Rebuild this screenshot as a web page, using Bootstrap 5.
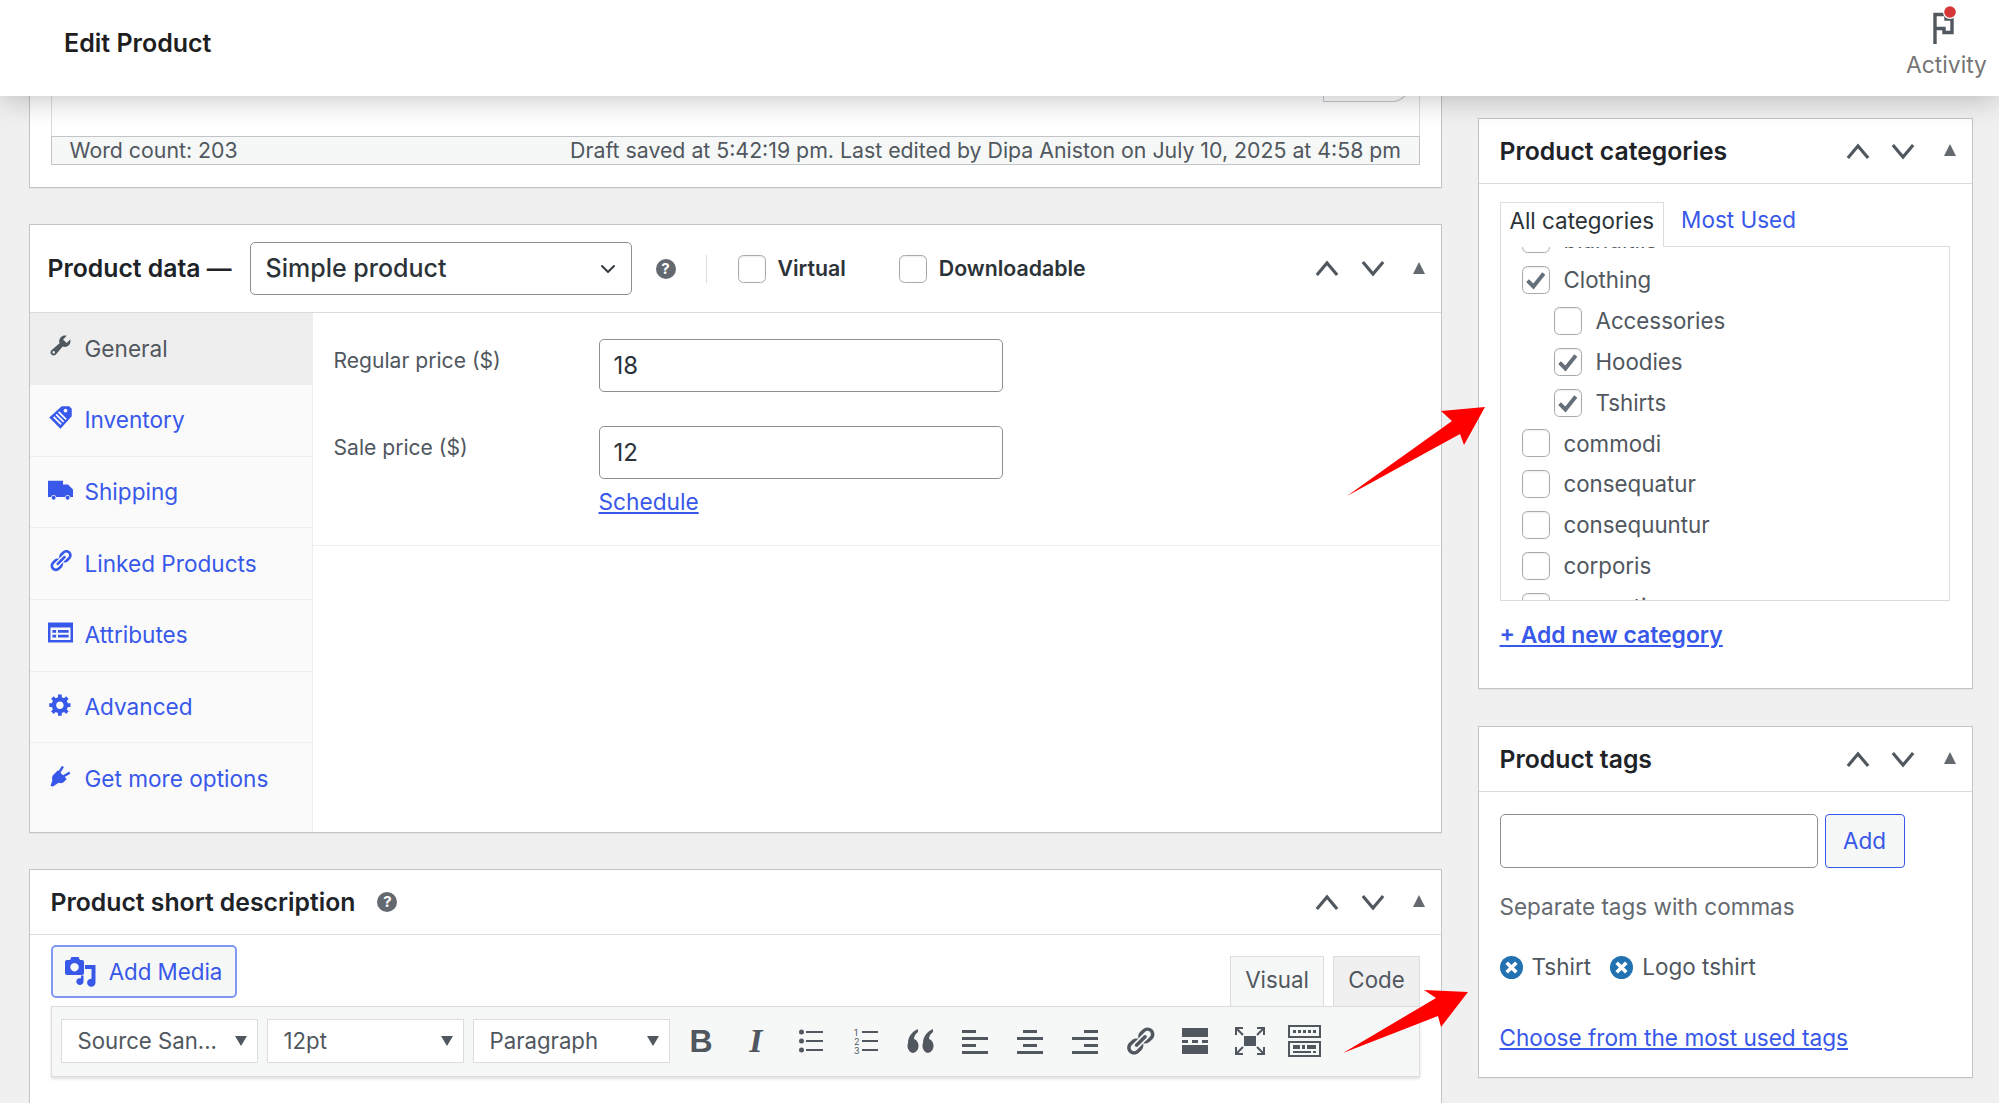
<!DOCTYPE html>
<html lang="en">
<head>
<meta charset="utf-8">
<title>Edit Product</title>
<link href="https://cdn.jsdelivr.net/npm/bootstrap@5.3.0/dist/css/bootstrap.min.css" rel="stylesheet">
<style>
body{font-family:Inter,"Liberation Sans",sans-serif;background:#f0f0f1;color:#50575e;font-size:22px;height:1103px;overflow:hidden}
a{color:#3858e9}
.wp-top{height:96px;background:#fff;box-shadow:0 0 32px rgba(0,0,0,.28);z-index:5;padding-left:64px;flex:none}
.wp-title{font-size:25px;font-weight:600;color:#1e1e1e;padding-bottom:9px}
.wp-activity{width:105px;padding-top:4px;height:96px;color:#757575;font-size:22.8px;line-height:26px}
.wp-activity svg{display:block;margin:0 auto 6px;width:34px;height:42px}
.wp-main{padding-left:28.5px;gap:35.5px;flex:1;min-height:0;overflow:hidden}
.wp-left{width:1413.5px;flex:none}
.wp-right{width:495px;flex:none;padding-top:22px}
.wp-box{background:#fff;border:1px solid #c3c4c7;border-radius:0;box-shadow:0 1px 1px rgba(0,0,0,.04)}
.wp-first{height:92px;border-top:0;margin-bottom:36px;padding:0 21px}
.wp-editor{height:69px;border:1px solid #dcdcde;border-top:0;border-bottom:0;position:relative}
.wp-ghostbtn{width:87px;height:20px;margin:-14px 0 0 1271px;border:1.5px solid #c6c7d2;border-top:0;border-radius:0 0 18px 0}
.wp-status{height:29px;border:1px solid #c3c4c7;background:#f6f7f7;margin-top:-29px;padding:0 18px;font-size:21.3px;line-height:27px;color:#50575e;position:relative}
.wp-hd{border-bottom:1px solid #dcdcde;background:#fff;padding:0;border-radius:0!important}
.wp-h88{height:88px;padding-left:18px}
.wp-h65{height:65px;padding-left:21px}
.wp-ttl{font-size:24.75px;font-weight:600;color:#1d2327;line-height:1}
.wp-pselect{width:382px;height:53px;margin-left:18px;font-size:25px;font-weight:500;color:#2c3338;border:1px solid #8c8f94;border-radius:5px;padding:0 15px;box-shadow:none;background-size:22px 16px;background-position:right 12px center}
.wp-q{width:20px;height:20px;border-radius:50%;background:#646970;color:#fff;font-size:15px;font-weight:700;line-height:20px;text-align:center;flex:none;display:inline-block}
.wp-sep{width:1px;height:28px;background:#dcdcde;margin:0 31px 0 30px}
.wp-chk{width:28px;height:28px;margin:0;border:1.5px solid #a7aaad;border-radius:6px;flex:none;float:none;box-shadow:inset 0 1px 2px rgba(0,0,0,.08)}
.form-check-input.wp-chk:checked{background-color:#fff;border-color:#a7aaad;background-size:100% 100%;background-image:url("data:image/svg+xml,%3Csvg xmlns='http://www.w3.org/2000/svg' viewBox='0 0 20 20'%3E%3Cpath fill='none' stroke='%23646f7a' stroke-width='3' d='M3.500 10.500L8 15l8-10'/%3E%3C/svg%3E")}
.wp-lbl{font-size:21.3px;font-weight:600;color:#2c3338;margin:0 0 0 12px}
.wp-mr54{margin-right:53px}
.wp-ctl{margin-left:auto;gap:0;padding-right:15px}
.wp-ctl svg{display:block}
.wp-ctl span+span{margin-left:21.5px}
.wp-ctl span:last-child{margin-left:27.5px;position:relative;top:-1px}
.wp-side{width:283px;flex:none;background:#fafafa;border-right:1px solid #eee}
.wp-side .list-group-item{height:71.7px;padding:0 0 0 18px;background:#fafafa;border:0;border-bottom:1px solid #eee;border-radius:0;color:#3858e9;font-size:22.6px;display:flex;align-items:center}
.wp-side .list-group-item svg{width:25px;height:25px;fill:currentColor;margin-right:12px;flex:none;position:relative;top:-3px}
.wp-side .wp-active{background:#eee!important;color:#50575e!important;height:72px!important}
.wp-panel{height:233px;border-bottom:1px solid #eee;padding:26px 0 0 21px}
.wp-flabel{width:265px;flex:none;font-size:21.1px;color:#50575e;padding-top:6px;margin:0}
.wp-inp{width:404px;height:53px;border:1px solid #8c8f94;border-radius:5px;font-size:24px;color:#2c3338;padding:0 14px;box-shadow:none}
.wp-mr{margin-top:34px}
.wp-sched{margin:8px 0 0 265px;display:block;font-size:22.7px;line-height:30px}
.wp-addmedia{height:53px;width:186px;font-size:22.3px;color:#3858e9;border:2px solid #8198f0;border-radius:5px;background:#f6f7f7;padding:0;display:flex;align-items:center;justify-content:center;gap:13px;margin:10px 0 8px}
.wp-addmedia:hover{color:#3858e9;background:#f6f7f7;border-color:#8198f0}
.wp-tb{padding:0 21px}
.wp-tab{height:50px;border:1px solid #dcdcde;border-bottom:0;background:#f6f7f7;font-size:22.3px;color:#50575e;display:flex;align-items:center;justify-content:center;border-radius:0;padding-bottom:3px}
.wp-tab1{width:94px;margin-right:9px}
.wp-tab2{width:87px;background:#f0f0f1}
.wp-tools{height:71px;background:#f6f7f7;border:1px solid #dcdcde;box-shadow:0 2px 3px rgba(0,0,0,.12);padding:0 0 1px 9px;align-items:center}
.wp-ts{width:197px;height:44px;margin-right:9px;background:#fff;border:1px solid #dcdcde;padding:0 0 0 16px;font-size:22.2px;color:#50575e;display:flex;align-items:center;position:relative;flex:none}
.wp-ts i{position:absolute;right:10px;top:16px;border:6.5px solid transparent;border-top:10px solid #50575e;border-bottom:0}
.wp-tbi{width:54.9px;flex:none;text-align:center;height:44px;display:flex;align-items:center;justify-content:center;color:#50575e}
.wp-tbi svg{fill:#50575e}
.wp-tbb{font:700 32px "Liberation Sans",sans-serif}
.wp-tbl{font:italic 700 34px "Liberation Serif",serif}
.wp-catbody{padding:17px 21px 0}
.wp-cattabs{height:45px;align-items:flex-end}
.wp-cattab{height:45px;display:flex;align-items:center;padding:0 9px 8px;font-size:22.4px;color:#2c3338;background:#fff;border:1px solid #dcdcde;border-bottom:0;position:relative;top:1px;z-index:1}
.wp-cattabs a{font-size:22.5px;text-decoration:none;margin:0 0 9px 17px}
.wp-catlist{height:355px;border:1px solid #dcdcde;overflow:hidden;width:450px}
.wp-catin{margin-top:-28px}
.wp-catrow{height:40.8px;display:flex;align-items:center;padding-left:21px;font-size:22.3px;color:#50575e;margin:0}
.wp-catrow .wp-chk{margin-right:14px}
.wp-ind{padding-left:53px}
.wp-addcat{display:block;margin-top:19px;font-size:22.9px;font-weight:600;line-height:30px}
.wp-catbox{height:571px;margin-bottom:37px}
.wp-tagbox{height:352px}
.wp-tagbody{padding:22px 21px 0}
.wp-taginp{width:318px;height:54px;border:1px solid #8c8f94;border-radius:5px;box-shadow:none}
.wp-addbtn{width:80px;height:54px;margin-left:7px;border:1.5px solid #3858e9;border-radius:4px;background:#f6f7f7;color:#3858e9;font-size:22.5px;padding:0}
.wp-addbtn:hover{color:#3858e9;background:#f6f7f7;border-color:#3858e9}
.wp-help{margin:24px 0 0;line-height:30px;font-size:22.5px;color:#646970}
.wp-tagrow{margin-top:30px;height:30px;font-size:22.5px;color:#50575e}
.wp-tagrow svg{margin-right:9px;flex:none}
.wp-tagrow span{margin-right:19px}
.wp-choose{display:block;margin-top:41px;font-size:22.6px;line-height:30px}
.wp-arrow{position:absolute;left:0;top:0;z-index:6;pointer-events:none}
</style>
</head>
<body class="d-flex flex-column position-relative">
<svg width="0" height="0" class="position-absolute">
  <defs>
    <symbol id="up" viewBox="0 0 26 18"><path d="M2 16L13 3l11 13" fill="none" stroke="#50575e" stroke-width="3.4"/></symbol>
    <symbol id="down" viewBox="0 0 26 18"><path d="M2 2l11 13L24 2" fill="none" stroke="#50575e" stroke-width="3.4"/></symbol>
    <symbol id="tri" viewBox="0 0 14 14"><path d="M7 1l6 12H1z" fill="#646970"/></symbol>
    <symbol id="xc" viewBox="0 0 24 24"><circle cx="12" cy="12" r="12" fill="#2271b1"/><path d="M7 7l10 10m0-10L7 17" stroke="#fff" stroke-width="3.8" fill="none"/></symbol>
    <symbol id="alignl" viewBox="0 0 26 26"><path d="M0 2h14v3H0zM0 9h26v3H0zM0 16h14v3H0zM0 23h26v3H0z"/></symbol>
    <symbol id="alignc" viewBox="0 0 26 26"><path d="M6 2h14v3H6zM0 9h26v3H0zM6 16h14v3H6zM0 23h26v3H0z"/></symbol>
    <symbol id="alignr" viewBox="0 0 26 26"><path d="M12 2h14v3H12zM0 9h26v3H0zM12 16h14v3H12zM0 23h26v3H0z"/></symbol>
  </defs>
</svg>

<header class="wp-top d-flex align-items-center justify-content-between position-relative">
  <div class="wp-title">Edit Product</div>
  <div class="wp-activity text-center">
    <svg viewBox="0 0 34 42"><path d="M5 40V10.500H16V15H22V28.500H14V24.500H5" fill="none" stroke="#50575e" stroke-width="3.4"/><circle cx="20" cy="8" r="7" fill="#fff"/><circle cx="20" cy="8" r="5.800" fill="#d63638"/></svg>
    Activity
  </div>
</header>

<div class="wp-main d-flex align-items-start">
  <div class="wp-left">
    <div class="card wp-box wp-first">
      <div class="wp-editor"><div class="wp-ghostbtn"></div></div>
      <div class="wp-status d-flex justify-content-between"><span>Word count: 203</span><span>Draft saved at 5:42:19 pm. Last edited by Dipa Aniston on July 10, 2025 at 4:58 pm</span></div>
    </div>

    <div class="card wp-box mb-0" style="margin-bottom:36px!important">
      <div class="card-header wp-hd wp-h88 d-flex align-items-center">
        <span class="wp-ttl">Product data —</span>
        <select class="form-select wp-pselect"><option>Simple product</option></select>
        <span class="wp-q ms-4">?</span>
        <span class="wp-sep"></span>
        <input class="form-check-input wp-chk" type="checkbox" id="v1"><label class="wp-lbl wp-mr54" for="v1">Virtual</label>
        <input class="form-check-input wp-chk" type="checkbox" id="v2"><label class="wp-lbl" for="v2">Downloadable</label>
        <div class="wp-ctl d-flex align-items-center">
          <span><svg width="24" height="17"><use href="#up"/></svg></span><span><svg width="24" height="17"><use href="#down"/></svg></span><span><svg width="14" height="14"><use href="#tri"/></svg></span>
        </div>
      </div>
      <div class="d-flex" style="height:519px">
        <div class="wp-side">
          <div class="list-group list-group-flush">
            <a class="list-group-item wp-active" href="#"><svg viewBox="0 0 20 20"><path d="M16.68 9.77c-1.34 1.34-3.3 1.67-4.95.99l-5.41 6.52c-.99.99-2.59.99-3.58 0s-.99-2.59 0-3.57l6.52-5.42c-.68-1.65-.35-3.61.99-4.95 1.28-1.28 3.12-1.62 4.72-1.06l-2.89 2.89 2.82 2.82 2.86-2.87c.53 1.58.18 3.39-1.08 4.65zM3.81 16.21c.4.39 1.04.39 1.43 0 .4-.4.4-1.04 0-1.43-.39-.4-1.03-.4-1.43 0-.39.39-.39 1.03 0 1.43z"/></svg>General</a>
            <a class="list-group-item" href="#"><svg viewBox="0 0 20 20"><path fill-rule="evenodd" d="M1 10l10-9h6l2 2v6l-9 10zM14 3a1.5 1.5 0 1 0 .01 0zM4 10l6 6 1-1-6-6zm2-2l6 6 1-1-6-6zm2-2l6 6 1-1-6-6z"/></svg>Inventory</a>
            <a class="list-group-item" href="#"><svg viewBox="0 0 20 20"><path d="M0 3h12v3h4l4 4v6h-2.2a2.2 2.2 0 0 0-4.2 0H6.6a2.2 2.2 0 0 0-4.2 0H0z"/><circle cx="4.5" cy="16.5" r="1.6"/><circle cx="15.7" cy="16.5" r="1.6"/></svg>Shipping</a>
            <a class="list-group-item" href="#"><svg viewBox="0 0 20 20"><path d="M17.74 2.76c1.68 1.69 1.68 4.41 0 6.1l-1.53 1.52c-1.12 1.12-2.7 1.47-4.14 1.09l2.62-2.61.76-.77.76-.76c.84-.84.84-2.2 0-3.04-.84-.85-2.2-.85-3.04 0l-.77.76-3.38 3.38c-.37-1.44-.02-3.02 1.1-4.14l1.52-1.53c1.69-1.68 4.42-1.68 6.1 0zM8.59 13.43l5.34-5.34c.42-.42.42-1.1 0-1.52-.44-.43-1.13-.39-1.53 0l-5.33 5.34c-.42.42-.42 1.1 0 1.52.44.43 1.13.39 1.52 0zm-.76 2.29l4.14-4.15c.38 1.44.03 3.02-1.09 4.14l-1.52 1.53c-1.69 1.68-4.41 1.68-6.1 0-1.68-1.68-1.68-4.42 0-6.1l1.53-1.52c1.12-1.12 2.7-1.47 4.14-1.1l-4.14 4.15c-.85.84-.85 2.2 0 3.05.84.84 2.2.84 3.04 0z"/></svg>Linked Products</a>
            <a class="list-group-item" href="#"><svg viewBox="0 0 20 20"><path fill-rule="evenodd" d="M0 2h20v16H0zM2 6v10h16V6zM3.5 8h3v2.2h-3zM3.5 11.8h3V14h-3zM8 8h8.5v2.2H8zM8 11.8h8.5V14H8z"/></svg>Attributes</a>
            <a class="list-group-item" href="#"><svg viewBox="0 0 20 20"><path d="M18 12h-2.18c-.17.7-.44 1.35-.81 1.93l1.54 1.54-2.1 2.1-1.54-1.54c-.58.36-1.23.63-1.91.79V19H8v-2.18c-.68-.16-1.33-.43-1.91-.79l-1.54 1.54-2.12-2.12 1.54-1.54c-.36-.58-.63-1.23-.79-1.91H1V9.03h2.17c.16-.7.44-1.35.8-1.94L2.43 5.55l2.1-2.1 1.54 1.54c.58-.37 1.24-.64 1.93-.81V2h3v2.18c.68.16 1.33.43 1.91.79l1.54-1.54 2.12 2.12-1.54 1.54c.36.59.64 1.24.8 1.94H18V12zm-8.5 1.5c1.66 0 3-1.34 3-3s-1.34-3-3-3-3 1.34-3 3 1.34 3 3 3z"/></svg>Advanced</a>
            <a class="list-group-item" href="#"><svg viewBox="0 0 20 20"><path d="M8 5l7 7-2.5 2.5c-1.5 1-3 1-4 .5L4 18l-2-.5 1.500-4.500c-.5-1.500-.3-3 .5-4zM11 1.500l1.800.8L10 7 8.400 6zM17 6l.8 1.800L13 10.500 12 9z"/></svg>Get more options</a>
          </div>
        </div>
        <div class="flex-grow-1">
          <div class="wp-panel">
            <div class="d-flex"><label class="wp-flabel">Regular price ($)</label><input class="form-control wp-inp" value="18"></div>
            <div class="d-flex wp-mr"><label class="wp-flabel">Sale price ($)</label><input class="form-control wp-inp" value="12"></div>
            <a class="wp-sched" href="#">Schedule</a>
          </div>
        </div>
      </div>
    </div>

    <div class="card wp-box" style="height:400px">
      <div class="card-header wp-hd wp-h65 d-flex align-items-center">
        <span class="wp-ttl">Product short description</span>
        <span class="wp-q" style="margin-left:22px">?</span>
        <div class="wp-ctl d-flex align-items-center">
          <span><svg width="24" height="17"><use href="#up"/></svg></span><span><svg width="24" height="17"><use href="#down"/></svg></span><span><svg width="14" height="14"><use href="#tri"/></svg></span>
        </div>
      </div>
      <div class="wp-tb">
        <div class="d-flex justify-content-between align-items-end">
          <button class="btn wp-addmedia" type="button">
            <svg width="31" height="30" viewBox="0 0 31 30" fill="#3858e9"><path fill-rule="evenodd" d="M2 3h3l1.500-3h7L15 3h2a2 2 0 0 1 2 2v11a2 2 0 0 1-2 2H2a2 2 0 0 1-2-2V5a2 2 0 0 1 2-2zM9.500 6a4.200 4.200 0 1 0 .01 0z"/><path d="M20 8h10.500v17.500a4.200 4 0 1 1-4-3.800V12H20z"/><path d="M16 18.500h2.500v6a3.600 3.400 0 1 1-2.500-3.200z"/></svg>
            Add Media
          </button>
          <div class="d-flex"><div class="wp-tab wp-tab1">Visual</div><div class="wp-tab wp-tab2">Code</div></div>
        </div>
        <div class="wp-tools d-flex">
          <div class="wp-ts">Source San...<i></i></div>
          <div class="wp-ts">12pt<i></i></div>
          <div class="wp-ts me-1">Paragraph<i></i></div>
          <div class="wp-tbi wp-tbb">B</div>
          <div class="wp-tbi wp-tbl">I</div>
          <div class="wp-tbi"><svg width="24" height="24" viewBox="0 0 24 24"><circle cx="2.500" cy="3" r="2.500"/><circle cx="2.500" cy="12" r="2.500"/><circle cx="2.500" cy="21" r="2.500"/><path d="M7 2h17v2H7zM7 11h17v2H7zM7 20h17v2H7z"/></svg></div>
          <div class="wp-tbi"><svg width="24" height="26" viewBox="0 0 24 26"><text x="0" y="8" font-size="9" font-family="Inter">1</text><text x="0" y="17" font-size="9" font-family="Inter">2</text><text x="0" y="26" font-size="9" font-family="Inter">3</text><path d="M8 3h16v2H8zM8 12h16v2H8zM8 21h16v2H8z"/></svg></div>
          <div class="wp-tbi"><svg width="27" height="24" viewBox="0 0 27 24"><path d="M11 0v3C8 5 7 8 7 10a5.500 7 0 1 1-6 4C1 7 6 2 11 0zM26 0v3c-3 2-4 5-4 7a5.500 7 0 1 1-6 4c0-7 5-12 10-14z"/></svg></div>
          <div class="wp-tbi"><svg width="26" height="26"><use href="#alignl"/></svg></div>
          <div class="wp-tbi"><svg width="26" height="26"><use href="#alignc"/></svg></div>
          <div class="wp-tbi"><svg width="26" height="26"><use href="#alignr"/></svg></div>
          <div class="wp-tbi"><svg width="32" height="32" viewBox="0 0 20 20" fill="#50575e"><path d="M17.74 2.76c1.68 1.69 1.68 4.41 0 6.1l-1.53 1.52c-1.12 1.12-2.7 1.47-4.14 1.09l2.62-2.61.76-.77.76-.76c.84-.84.84-2.2 0-3.04-.84-.85-2.2-.85-3.04 0l-.77.76-3.38 3.38c-.37-1.44-.02-3.02 1.1-4.14l1.52-1.53c1.69-1.68 4.42-1.68 6.1 0zM8.59 13.43l5.34-5.34c.42-.42.42-1.1 0-1.52-.44-.43-1.13-.39-1.53 0l-5.33 5.34c-.42.42-.42 1.1 0 1.52.44.43 1.13.39 1.52 0zm-.76 2.29l4.14-4.15c.38 1.44.03 3.02-1.09 4.14l-1.52 1.53c-1.69 1.68-4.41 1.68-6.1 0-1.68-1.68-1.68-4.42 0-6.1l1.53-1.52c1.12-1.12 2.7-1.47 4.14-1.1l-4.14 4.15c-.85.84-.85 2.2 0 3.05.84.84 2.2.84 3.04 0z"/></svg></div>
          <div class="wp-tbi"><svg width="26" height="26" viewBox="0 0 26 26"><path d="M0 0h26v9H0zM0 12h6v3H0zM10 12h6v3h-6zM20 12h6v3h-6zM0 17h26v9H0z"/></svg></div>
          <div class="wp-tbi"><svg width="30" height="28" viewBox="0 0 30 28"><path d="M9 9h12v10H9z"/><path d="M1 8V1h7M22 1h7v7M29 20v7h-7M8 27H1v-7M2 2l6 6M28 2l-6 6M28 26l-6-6M2 26l6-6" fill="none" stroke="#50575e" stroke-width="2"/></svg></div>
          <div class="wp-tbi"><svg width="33" height="32" viewBox="0 0 33 32"><path fill-rule="evenodd" d="M0 0h33v13H0zM2 2v9h29V2zM0 16h33v16H0zM2 18v12h29V18z"/><path d="M5 5h3v3H5zM10 5h3v3h-3zM15 5h3v3h-3zM20 5h3v3h-3zM25 5h3v3h-3zM5 20h7v4H5zM14 20h3v4h-3zM19 20h9v4h-9zM5 26h18v2H5zM25 26h3v2h-3z"/></svg></div>
        </div>
      </div>
    </div>
  </div>

  <div class="wp-right">
    <div class="card wp-box wp-catbox">
      <div class="card-header wp-hd wp-h65 d-flex align-items-center">
        <span class="wp-ttl">Product categories</span>
        <div class="wp-ctl d-flex align-items-center">
          <span><svg width="24" height="17"><use href="#up"/></svg></span><span><svg width="24" height="17"><use href="#down"/></svg></span><span><svg width="14" height="14"><use href="#tri"/></svg></span>
        </div>
      </div>
      <div class="wp-catbody">
        <div class="wp-cattabs d-flex"><div class="wp-cattab">All categories</div><a href="#">Most Used</a></div>
        <div class="wp-catlist">
          <div class="wp-catin">
            <label class="wp-catrow"><input class="form-check-input wp-chk" type="checkbox">blanditiis</label>
            <label class="wp-catrow"><input class="form-check-input wp-chk" type="checkbox" checked>Clothing</label>
            <label class="wp-catrow wp-ind"><input class="form-check-input wp-chk" type="checkbox">Accessories</label>
            <label class="wp-catrow wp-ind"><input class="form-check-input wp-chk" type="checkbox" checked>Hoodies</label>
            <label class="wp-catrow wp-ind"><input class="form-check-input wp-chk" type="checkbox" checked>Tshirts</label>
            <label class="wp-catrow"><input class="form-check-input wp-chk" type="checkbox">commodi</label>
            <label class="wp-catrow"><input class="form-check-input wp-chk" type="checkbox">consequatur</label>
            <label class="wp-catrow"><input class="form-check-input wp-chk" type="checkbox">consequuntur</label>
            <label class="wp-catrow"><input class="form-check-input wp-chk" type="checkbox">corporis</label>
            <label class="wp-catrow"><input class="form-check-input wp-chk" type="checkbox">corrupti</label>
          </div>
        </div>
        <a class="wp-addcat" href="#">+ Add new category</a>
      </div>
    </div>

    <div class="card wp-box wp-tagbox">
      <div class="card-header wp-hd wp-h65 d-flex align-items-center">
        <span class="wp-ttl">Product tags</span>
        <div class="wp-ctl d-flex align-items-center">
          <span><svg width="24" height="17"><use href="#up"/></svg></span><span><svg width="24" height="17"><use href="#down"/></svg></span><span><svg width="14" height="14"><use href="#tri"/></svg></span>
        </div>
      </div>
      <div class="wp-tagbody">
        <div class="d-flex"><input class="form-control wp-taginp"><button class="btn wp-addbtn" type="button">Add</button></div>
        <p class="wp-help">Separate tags with commas</p>
        <div class="wp-tagrow d-flex align-items-center">
          <svg width="23" height="23"><use href="#xc"/></svg><span>Tshirt</span>
          <svg width="23" height="23"><use href="#xc"/></svg><span>Logo tshirt</span>
        </div>
        <a class="wp-choose" href="#">Choose from the most used tags</a>
      </div>
    </div>
  </div>
</div>

<svg class="wp-arrow" width="1999" height="1103" viewBox="0 0 1999 1103">
  <polygon fill="#fe0000" points="1347,496 1452,421 1441,411 1485,407 1464,445 1460,434"/>
  <polygon fill="#fe0000" points="1343,1053 1436,998 1424,990 1468,992 1441,1027 1438,1016"/>
</svg>
<script src="https://cdn.jsdelivr.net/npm/bootstrap@5.3.0/dist/js/bootstrap.bundle.min.js"></script>
</body>
</html>
